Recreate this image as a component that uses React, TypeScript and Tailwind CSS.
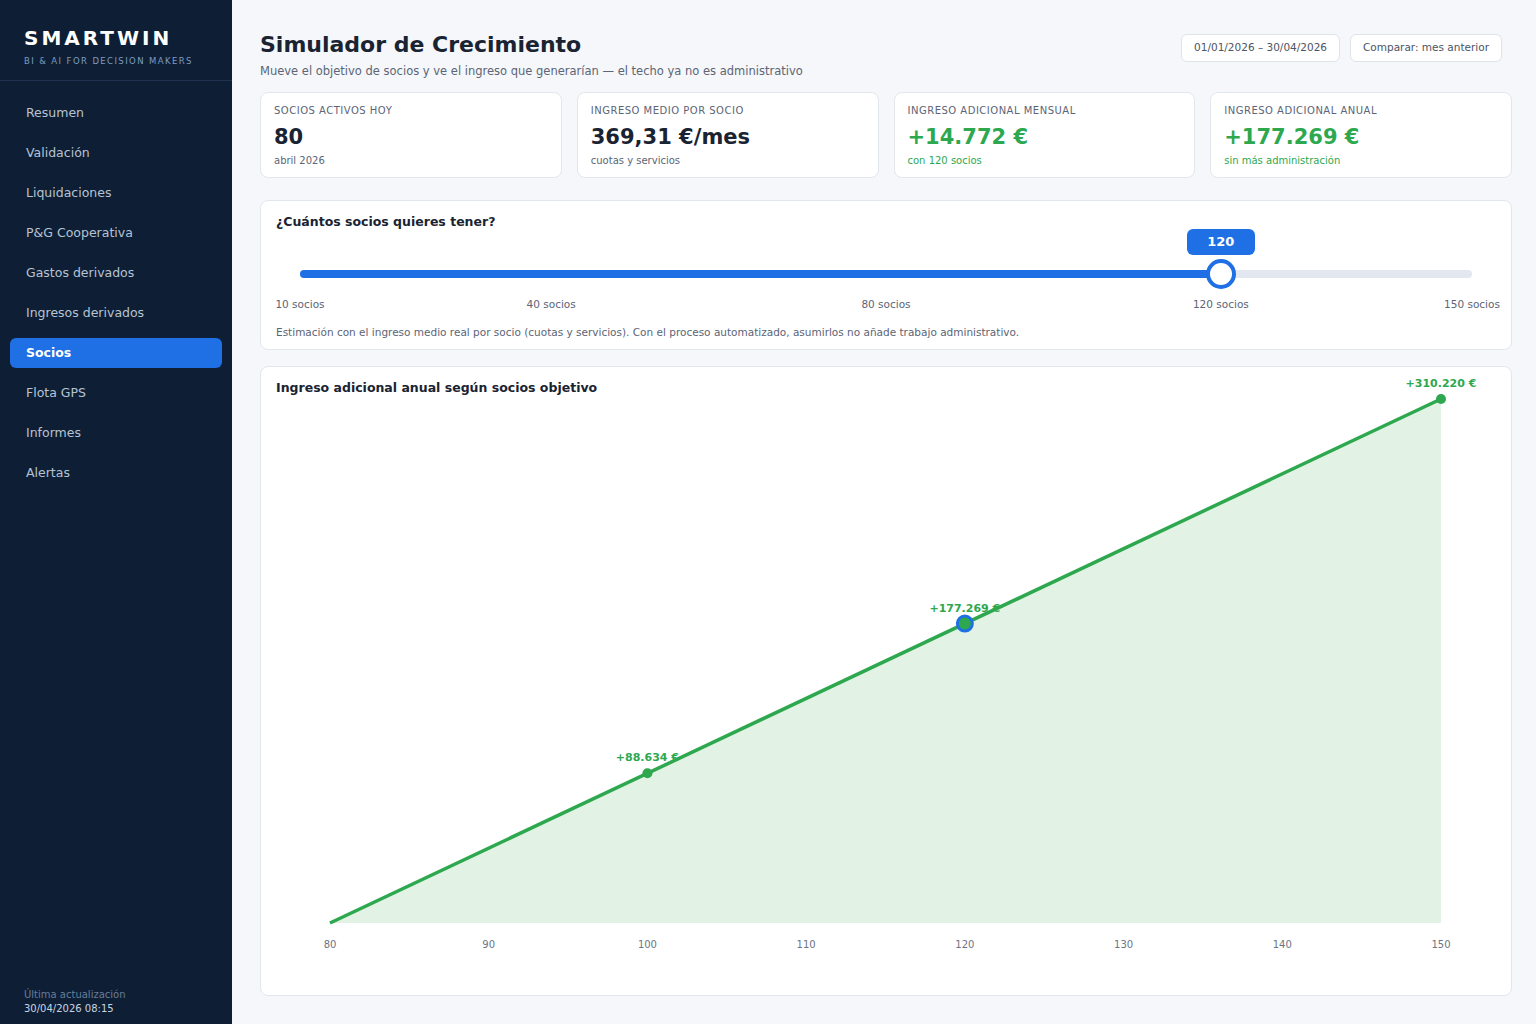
import React from 'react'

const nav = [
  'Resumen',
  'Validación',
  'Liquidaciones',
  'P&G Cooperativa',
  'Gastos derivados',
  'Ingresos derivados',
  'Socios',
  'Flota GPS',
  'Informes',
  'Alertas',
]

const kpis = [
  { label: 'SOCIOS ACTIVOS HOY', value: '80', sub: 'abril 2026', green: false },
  { label: 'INGRESO MEDIO POR SOCIO', value: '369,31 €/mes', sub: 'cuotas y servicios', green: false },
  { label: 'INGRESO ADICIONAL MENSUAL', value: '+14.772 €', sub: 'con 120 socios', green: true },
  { label: 'INGRESO ADICIONAL ANUAL', value: '+177.269 €', sub: 'sin más administración', green: true },
]

const ticks = [10, 40, 80, 120, 150]
const pct = (v: number) => ((v - 10) / 140) * 100

// chart coords are relative to svg (page x - 261, page y - 395)
const X = (v: number) => 69 + ((v - 80) / 70) * 1111
const Y = (e: number) => 528 - (e / 310220) * 524

function Sidebar() {
  return (
    <aside className="flex w-[232px] shrink-0 flex-col bg-[#0e1f35]">
      <div className="h-[81px] border-b border-[#1f3350] px-6 pt-[26px]">
        <div className="text-[20px] leading-[24px] font-bold tracking-[3px] text-white">SMARTWIN</div>
        <div className="mt-[5px] text-[8.5px] leading-[12px] tracking-[1.4px] text-[#7d9bc2]">BI &amp; AI FOR DECISION MAKERS</div>
      </div>
      <nav className="flex flex-col gap-[10px] px-[10px] pt-[17px]">
        {nav.map((n) =>
          n === 'Socios' ? (
            <div key={n} className="flex h-[30px] items-center rounded-md bg-[#1f6fe5] px-4 text-[12.5px] font-bold text-white">
              {n}
            </div>
          ) : (
            <div key={n} className="flex h-[30px] items-center px-4 text-[12.5px] text-[#b7c3d3]">
              {n}
            </div>
          ),
        )}
      </nav>
      <div className="mt-auto px-6 pb-[8px]">
        <div className="text-[10px] leading-[14px] text-[#687c97]">Última actualización</div>
        <div className="text-[10px] leading-[14px] text-[#c9d4e2]">30/04/2026 08:15</div>
      </div>
    </aside>
  )
}

function Kpi({ label, value, sub, green }: { label: string; value: string; sub: string; green: boolean }) {
  return (
    <div className="h-[86px] rounded-lg border border-[#e2e7ee] bg-white px-[13px] pt-[12px]">
      <div className="text-[10px] leading-[12px] tracking-[0.5px] text-[#5b6576]">{label}</div>
      <div className={`mt-[6px] text-[21px] leading-[28px] font-bold ${green ? 'text-[#2ea84f]' : 'text-[#1a2332]'}`}>{value}</div>
      <div className={`mt-[4px] text-[10px] leading-[12px] ${green ? 'text-[#2ea84f]' : 'text-[#5b6576]'}`}>{sub}</div>
    </div>
  )
}

function SliderCard() {
  const p = pct(120)
  return (
    <div className="mt-[22px] h-[150px] rounded-lg border border-[#e2e7ee] bg-white px-[15px] pt-[13px]">
      <div className="text-[12.5px] leading-[16px] font-bold text-[#1a2332]">¿Cuántos socios quieres tener?</div>
      <div className="relative mx-[24px] mt-[40px] h-[8px] rounded-full bg-[#e3e8f0]">
        <div className="h-full rounded-full bg-[#1f6fe5]" style={{ width: `${p}%` }} />
        <div
          className="absolute top-[-41px] flex h-[26px] w-[68px] -translate-x-1/2 items-center justify-center rounded-md bg-[#1f6fe5] text-[13px] font-bold text-white"
          style={{ left: `${p}%` }}
        >
          120
        </div>
        <div
          className="absolute top-[-11px] h-[30px] w-[30px] -translate-x-1/2 rounded-full border-[4px] border-[#1f6fe5] bg-white"
          style={{ left: `${p}%` }}
        />
      </div>
      <div className="relative mx-[24px] mt-[18px] h-[16px]">
        {ticks.map((t) => (
          <div
            key={t}
            className="absolute top-0 -translate-x-1/2 whitespace-nowrap text-[10.5px] leading-[16px] text-[#5b6576]"
            style={{ left: `${pct(t)}%` }}
          >
            {t} socios
          </div>
        ))}
      </div>
      <div className="mt-[12px] text-[10.5px] leading-[16px] text-[#5b6576]">
        Estimación con el ingreso medio real por socio (cuotas y servicios). Con el proceso automatizado, asumirlos no añade trabajo administrativo.
      </div>
    </div>
  )
}

function ChartCard() {
  const pts = [
    { v: 100, e: 88634 },
    { v: 120, e: 177269 },
    { v: 150, e: 310220 },
  ]
  const line = `M${X(80)},${Y(0)} L${X(150)},${Y(310220)}`
  const area = `M${X(80)},${Y(0)} L${X(150)},${Y(310220)} L${X(150)},${Y(0)} Z`
  return (
    <div className="mt-[16px] h-[630px] rounded-lg border border-[#e2e7ee] bg-white">
      <div className="h-[28px] px-[15px] pt-[13px] text-[12.5px] leading-[16px] font-bold text-[#1a2332]">
        Ingreso adicional anual según socios objetivo
      </div>
      <svg width="1250" height="600" className="block overflow-visible" style={{ fontFamily: 'DejaVu Sans, sans-serif' }}>
        <path d={area} fill="#e2f3e5" />
        <path d={line} stroke="#2ea84f" strokeWidth="3.5" fill="none" />
        {pts.map((p) =>
          p.v === 120 ? (
            <circle key={p.v} cx={X(p.v)} cy={Y(p.e)} r="7.5" fill="#2ea84f" stroke="#1f6fe5" strokeWidth="3" />
          ) : (
            <circle key={p.v} cx={X(p.v)} cy={Y(p.e)} r="5" fill="#2ea84f" />
          ),
        )}
        <text x={X(150)} y={Y(310220) - 12} textAnchor="middle" fontSize="11" fontWeight="bold" fill="#2ea84f">
          +310.220 €
        </text>
        <text x={X(120)} y={Y(177269) - 12} textAnchor="middle" fontSize="11" fontWeight="bold" fill="#2ea84f">
          +177.269 €
        </text>
        <text x={X(100)} y={Y(88634) - 12} textAnchor="middle" fontSize="11" fontWeight="bold" fill="#2ea84f">
          +88.634 €
        </text>
        {[80, 90, 100, 110, 120, 130, 140, 150].map((v) => (
          <text key={v} x={X(v)} y={553} textAnchor="middle" fontSize="10" fill="#6b7585">
            {v}
          </text>
        ))}
      </svg>
    </div>
  )
}

export default function App() {
  return (
    <div className="flex min-h-screen bg-[#f5f7fa]" style={{ fontFamily: '"DejaVu Sans", sans-serif' }}>
      <Sidebar />
      <main className="flex-1 pl-[28px] pr-[24px] pt-[31px] pb-[28px]">
        <div className="flex items-start justify-between pr-[10px]">
          <div>
            <h1 className="text-[22px] leading-[28px] font-bold text-[#1a2332]">Simulador de Crecimiento</h1>
            <p className="mt-[4px] text-[11.5px] leading-[16px] text-[#5b6576]">
              Mueve el objetivo de socios y ve el ingreso que generarían — el techo ya no es administrativo
            </p>
          </div>
          <div className="mt-[3px] flex gap-[10px]">
            <div className="flex h-[28px] items-center rounded-md border border-[#dfe4eb] bg-white px-[12px] text-[10.5px] text-[#4b5563]">
              01/01/2026 – 30/04/2026
            </div>
            <div className="flex h-[28px] items-center rounded-md border border-[#dfe4eb] bg-white px-[12px] text-[10.5px] text-[#4b5563]">
              Comparar: mes anterior
            </div>
          </div>
        </div>
        <div className="mt-[13px] grid grid-cols-4 gap-[15px]">
          {kpis.map((k) => (
            <Kpi key={k.label} {...k} />
          ))}
        </div>
        <SliderCard />
        <ChartCard />
      </main>
    </div>
  )
}
